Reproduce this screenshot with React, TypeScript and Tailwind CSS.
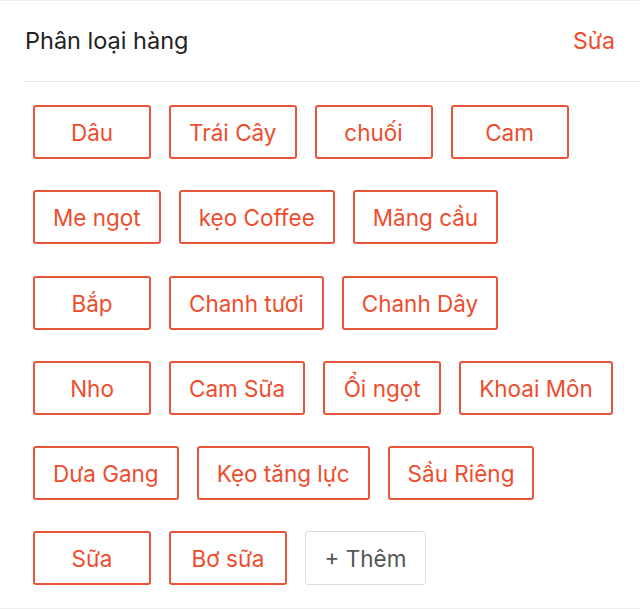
import React from 'react';

const tags = [
  'Dâu', 'Trái Cây', 'chuối', 'Cam',
  'Me ngọt', 'kẹo Coffee', 'Mãng cầu',
  'Bắp', 'Chanh tươi', 'Chanh Dây',
  'Nho', 'Cam Sữa', 'Ổi ngọt', 'Khoai Môn',
  'Dưa Gang', 'Kẹo tăng lực', 'Sầu Riêng',
  'Sữa', 'Bơ sữa',
];

export default function App() {
  return (
    <div className="w-[640px] h-[609px] bg-white border-y border-[#eeeeee] font-['Inter','Noto_Sans',sans-serif] overflow-hidden">
      <div className="ml-[24px] h-[81px] pl-[1px] pr-[25px] flex items-center justify-between border-b border-[#e8e8e8]">
        <span className="text-[23.5px] text-[#222222]">Phân loại hàng</span>
        <button className="text-[23px] text-[#ee4d2d]">Sửa</button>
      </div>
      <div className="flex flex-wrap gap-x-[18px] gap-y-[31.25px] pl-[33px] pr-[20px] pt-[23px]">
        {tags.map((t) => (
          <div
            key={t}
            className="min-w-[118px] h-[54px] px-[18px] pt-[2px] flex items-center justify-center border-2 border-[#e9553a] rounded-[3px] text-[22.5px] text-[#ee4d2d]"
          >
            {t}
          </div>
        ))}
        <div className="min-w-[121px] h-[54px] px-[18px] pt-[2px] flex items-center justify-center border border-[#dddddd] rounded-[3px] text-[22.5px] text-[#555555]">
          + Thêm
        </div>
      </div>
    </div>
  );
}
